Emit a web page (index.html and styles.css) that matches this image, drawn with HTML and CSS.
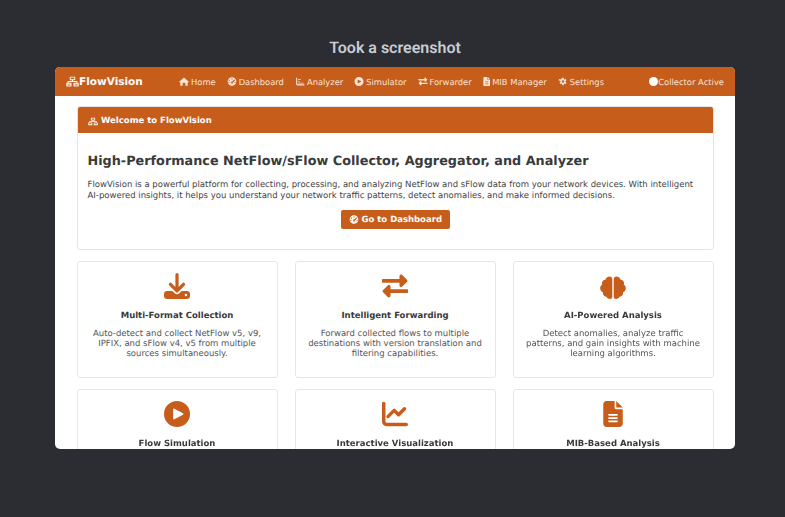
FILE: index.html
```html
<!DOCTYPE html>
<html lang="en">
<head>
    <meta charset="UTF-8">
    <meta name="viewport" content="width=device-width, initial-scale=1.0">
    <title>FlowVision</title>
    <link rel="stylesheet" href="styles.css">
</head>
<body>
    <svg class="sprite" width="0" height="0">
        <symbol id="i-network" viewBox="0 0 640 512"><path fill-rule="evenodd" d="M208 16h224a24 24 0 0 1 24 24v128a24 24 0 0 1-24 24H344v40h196a24 24 0 0 1 24 24v64h36a24 24 0 0 1 24 24v128a24 24 0 0 1-24 24H392a24 24 0 0 1-24-24V344a24 24 0 0 1 24-24h124v-40H124v40h124a24 24 0 0 1 24 24v128a24 24 0 0 1-24 24H40a24 24 0 0 1-24-24V344a24 24 0 0 1 24-24h36v-64a24 24 0 0 1 24-24h196v-40h-88a24 24 0 0 1-24-24V40a24 24 0 0 1 24-24zm24 48v80h176V64H232zM64 368v40h160v-40H64zm352 0v40h160v-40H416zM64 440v24h160v-24H64zm352 0v24h160v-24H416z"/></symbol>
        <symbol id="i-home" viewBox="0 0 576 512"><path d="M288 24 10 268c-12 11-4 30 12 30h54v174c0 18 14 32 32 32h104V352a24 24 0 0 1 24-24h104a24 24 0 0 1 24 24v152h104c18 0 32-14 32-32V298h54c16 0 24-19 12-30L288 24z"/></symbol>
        <symbol id="i-gauge" viewBox="0 0 512 512"><path fill-rule="evenodd" d="M256 8a248 248 0 1 0 0 496 248 248 0 0 0 0-496zm0 64a36 36 0 1 1 0 72 36 36 0 0 1 0-72zM112 144a36 36 0 1 1 0 72 36 36 0 0 1 0-72zm-32 120a36 36 0 1 1 0 72 36 36 0 0 1 0-72zm352 0a36 36 0 1 1 0 72 36 36 0 0 1 0-72zM400 136a34 34 0 0 1 22 60l-112 112a60 60 0 1 1-46-46l112-112c6-9 14-14 24-14zM256 310a28 28 0 1 0 0 56 28 28 0 0 0 0-56z"/></symbol>
        <symbol id="i-chart" viewBox="0 0 512 512"><path d="M64 32a32 32 0 0 1 32 32v336c0 9 7 16 16 16h368a32 32 0 1 1 0 64H112a80 80 0 0 1-80-80V64a32 32 0 0 1 32-32z"/><path d="M160 224h64a24 24 0 0 1 0 48h-64a24 24 0 0 1 0-48zm0 96h288a24 24 0 0 1 0 48H160a24 24 0 0 1 0-48zm0-192h128a24 24 0 0 1 0 48H160a24 24 0 0 1 0-48z"/></symbol>
        <symbol id="i-line" viewBox="32 24 480 464"><path d="M64 32a32 32 0 0 1 32 32v336c0 9 7 16 16 16h368a32 32 0 1 1 0 64H112a80 80 0 0 1-80-80V64a32 32 0 0 1 32-32z"/><path d="M470 137a32 32 0 0 1 0 45L360 292a32 32 0 0 1-45 0l-58-57-88 87a32 32 0 1 1-45-45l110-110a32 32 0 0 1 45 0l58 57 88-87a32 32 0 0 1 45 0z"/></symbol>
        <symbol id="i-play" viewBox="0 0 512 512"><path fill-rule="evenodd" d="M256 0a256 256 0 1 0 0 512 256 256 0 0 0 0-512zm-68 152c5-3 12-3 17 0l168 88c11 6 11 26 0 32l-168 88c-11 6-25-2-25-16V168c0-7 3-13 8-16z"/></symbol>
        <symbol id="i-arrows" viewBox="0 0 512 512"><path d="M24 116h320V62c0-13 8-24 20-29s26-2 35 7l96 96c9 10 9 26 0 36l-96 96c-9 9-23 12-35 7s-20-16-20-29v-54H24a30 30 0 0 1 0-76zM488 320H168v-54c0-13-8-24-20-29s-26-2-35 7l-96 96c-9 10-9 26 0 36l96 96c9 9 23 12 35 7s20-16 20-29v-54h320a30 30 0 0 0 0-76z"/></symbol>
        <symbol id="i-file" viewBox="0 0 384 512"><path fill-rule="evenodd" d="M64 0h160v128c0 18 14 32 32 32h128v288c0 35-29 64-64 64H64c-35 0-64-29-64-64V64C0 29 29 0 64 0zm192 0 128 128H256V0zM112 256a16 16 0 0 0 0 32h160a16 16 0 0 0 0-32H112zm0 64a16 16 0 0 0 0 32h160a16 16 0 0 0 0-32H112zm0 64a16 16 0 0 0 0 32h160a16 16 0 0 0 0-32H112z"/></symbol>
        <symbol id="i-gear" viewBox="0 0 512 512"><path fill-rule="evenodd" d="M216 0h80l12 68c15 5 29 13 42 23l65-24 40 70-53 44c2 8 3 17 3 26s-1 18-3 27l53 43-40 70-65-24c-13 10-27 18-42 23l-12 68h-80l-12-68c-15-5-29-13-42-23l-65 24-40-70 53-43c-2-9-3-18-3-27s1-18 3-26L-2 137l40-70 65 24c13-10 27-18 42-23L216 0zm40 140a67 67 0 1 0 0 134 67 67 0 0 0 0-134z" transform="translate(0 49)"/></symbol>
        <symbol id="i-download" viewBox="0 0 512 512"><path d="M288 32a32 32 0 0 0-64 0v243l-73-74a32 32 0 0 0-46 46l128 128a32 32 0 0 0 46 0l128-128a32 32 0 0 0-46-46l-73 74V32zM64 352a64 64 0 0 0-64 64v32a64 64 0 0 0 64 64h384a64 64 0 0 0 64-64v-32a64 64 0 0 0-64-64H347l-46 45a64 64 0 0 1-90 0l-46-45H64zm368 56a24 24 0 1 1 0 48 24 24 0 0 1 0-48z"/></symbol>
        <symbol id="i-brain" viewBox="32 0 448 512" preserveAspectRatio="none"><path d="M244 44v428c0 22-18 40-42 40-28 0-50-18-56-44-36-4-64-34-64-70 0-8 1-14 3-20-30-14-50-44-50-80 0-28 14-54 36-70-4-10-6-20-6-30 0-34 26-62 60-66 6-36 38-64 74-64 24 0 45 22 45 48zM268 44v428c0 22 18 40 42 40 28 0 50-18 56-44 36-4 64-34 64-70 0-8-1-14-3-20 30-14 50-44 50-80 0-28-14-54-36-70 4-10 6-20 6-30 0-34-26-62-60-66-6-36-38-64-74-64-24 0-45 22-45 48z"/></symbol>
    </svg>

    <h1 class="shot-title">Took a screenshot</h1>

    <div class="app-window">
        <nav class="navbar">
            <a class="brand"><svg class="ico"><use href="#i-network"/></svg>FlowVision</a>
            <div class="nav-links">
                <a class="nav-link"><svg class="ico"><use href="#i-home"/></svg>Home</a>
                <a class="nav-link"><svg class="ico"><use href="#i-gauge"/></svg>Dashboard</a>
                <a class="nav-link"><svg class="ico"><use href="#i-chart"/></svg>Analyzer</a>
                <a class="nav-link"><svg class="ico"><use href="#i-play"/></svg>Simulator</a>
                <a class="nav-link"><svg class="ico"><use href="#i-arrows"/></svg>Forwarder</a>
                <a class="nav-link"><svg class="ico ico-narrow"><use href="#i-file"/></svg>MIB Manager</a>
                <a class="nav-link"><svg class="ico"><use href="#i-gear"/></svg>Settings</a>
            </div>
            <div class="collector"><span class="status-dot"></span>Collector Active</div>
        </nav>

        <main class="content">
            <section class="welcome">
                <div class="welcome-head"><svg class="ico"><use href="#i-network"/></svg>Welcome to FlowVision</div>
                <div class="welcome-body">
                    <h2>High-Performance NetFlow/sFlow Collector, Aggregator, and Analyzer</h2>
                    <p>FlowVision is a powerful platform for collecting, processing, and analyzing NetFlow and sFlow data from your network devices. With intelligent AI-powered insights, it helps you understand your network traffic patterns, detect anomalies, and make informed decisions.</p>
                    <div class="cta-row">
                        <a class="btn"><svg class="ico"><use href="#i-gauge"/></svg>Go to Dashboard</a>
                    </div>
                </div>
            </section>

            <section class="features">
                <article class="feature">
                    <svg class="feature-ico"><use href="#i-download"/></svg>
                    <h3>Multi-Format Collection</h3>
                    <p>Auto-detect and collect NetFlow v5, v9, IPFIX, and sFlow v4, v5 from multiple sources simultaneously.</p>
                </article>
                <article class="feature">
                    <svg class="feature-ico"><use href="#i-arrows"/></svg>
                    <h3>Intelligent Forwarding</h3>
                    <p>Forward collected flows to multiple destinations with version translation and filtering capabilities.</p>
                </article>
                <article class="feature">
                    <svg class="feature-ico"><use href="#i-brain"/></svg>
                    <h3>AI-Powered Analysis</h3>
                    <p>Detect anomalies, analyze traffic patterns, and gain insights with machine learning algorithms.</p>
                </article>
                <article class="feature">
                    <svg class="feature-ico"><use href="#i-play"/></svg>
                    <h3>Flow Simulation</h3>
                </article>
                <article class="feature">
                    <svg class="feature-ico"><use href="#i-line"/></svg>
                    <h3>Interactive Visualization</h3>
                </article>
                <article class="feature">
                    <svg class="feature-ico"><use href="#i-file"/></svg>
                    <h3>MIB-Based Analysis</h3>
                </article>
            </section>
        </main>
    </div>
</body>
</html>
```

FILE: styles.css
```css
* {
    box-sizing: border-box;
}

html, body {
    height: 100%;
}

body {
    margin: 0;
    background: #2b2d33;
    font-family: "DejaVu Sans", sans-serif;
    text-rendering: geometricPrecision;
    color: #333;
    overflow: hidden;
}

.sprite {
    display: block;
    height: 0;
}

.shot-title {
    margin: 0;
    padding: 38px 0 0 5px;
    height: 67px;
    font-family: Roboto, Inter, sans-serif;
    font-size: 16px;
    line-height: 20px;
    font-weight: 600;
    text-align: center;
    color: #c9ccd1;
}

/* App window (the source is a scaled-down capture, hence the slight blur) */
.app-window {
    width: 680px;
    height: 382px;
    margin-left: 55px;
    background: #fff;
    border-radius: 5px;
    overflow: hidden;
    filter: blur(0.3px);
}

.navbar {
    display: flex;
    align-items: center;
    height: 29px;
    padding: 0 11px;
    background: #c65d1b;
    color: #f6e4d8;
}

.ico {
    width: 10px;
    height: 9px;
    fill: currentColor;
    flex: none;
}

.ico-narrow {
    width: 7.5px;
}

.brand {
    display: flex;
    align-items: center;
    width: 113px;
    font-size: 10.5px;
    font-weight: 700;
    color: #fff;
}

.brand .ico {
    width: 13px;
    height: 11px;
}

.nav-links {
    display: flex;
    gap: 11px;
}

.nav-link {
    display: flex;
    align-items: center;
    gap: 2px;
    font-size: 8.35px;
}

.collector {
    display: flex;
    align-items: center;
    margin-left: auto;
    font-size: 8.4px;
}

.status-dot {
    width: 9px;
    height: 9px;
    border-radius: 50%;
    background: #fff;
}

/* Page content */
.content {
    padding: 10px 21px 0 22px;
}

.welcome {
    border: 1px solid #e4e4e4;
    border-radius: 3px;
    overflow: hidden;
}

.welcome-head {
    display: flex;
    align-items: center;
    gap: 3px;
    height: 26px;
    padding: 2px 10px 0;
    background: #c65d1b;
    color: #fff;
    font-size: 8.5px;
    font-weight: 700;
}

.welcome-body {
    height: 116px;
    padding: 20px 10px 0 9.5px;
}

.welcome-body h2 {
    margin: 0 0 10px;
    font-size: 12.8px;
    line-height: 17px;
    font-weight: 700;
    color: #3a3a3a;
}

.welcome-body p {
    margin: 0 0 9px;
    font-size: 8.5px;
    line-height: 10.5px;
    color: #444;
}

.cta-row {
    display: flex;
    justify-content: center;
}

.btn {
    display: flex;
    align-items: center;
    gap: 3px;
    height: 19px;
    padding: 0 8px;
    border-radius: 2px;
    background: #c65d1b;
    color: #fff;
    font-size: 8.5px;
    font-weight: 700;
}

.features {
    display: grid;
    grid-template-columns: repeat(3, 201px);
    column-gap: 17px;
    row-gap: 11px;
    margin-top: 11px;
}

.feature {
    height: 117px;
    padding: 11px 12px 0 11px;
    border: 1px solid #e6e6e6;
    border-radius: 3px;
    text-align: center;
}

.feature-ico {
    display: block;
    width: 26px;
    height: 26px;
    margin: 0 auto 12px;
    fill: #c65d1b;
}

.feature h3 {
    margin: 0 0 7px;
    font-size: 8.5px;
    line-height: 11px;
    font-weight: 700;
    color: #3a3a3a;
}

.feature p {
    margin: 0;
    font-size: 8.5px;
    line-height: 10.2px;
    color: #555;
}
```
